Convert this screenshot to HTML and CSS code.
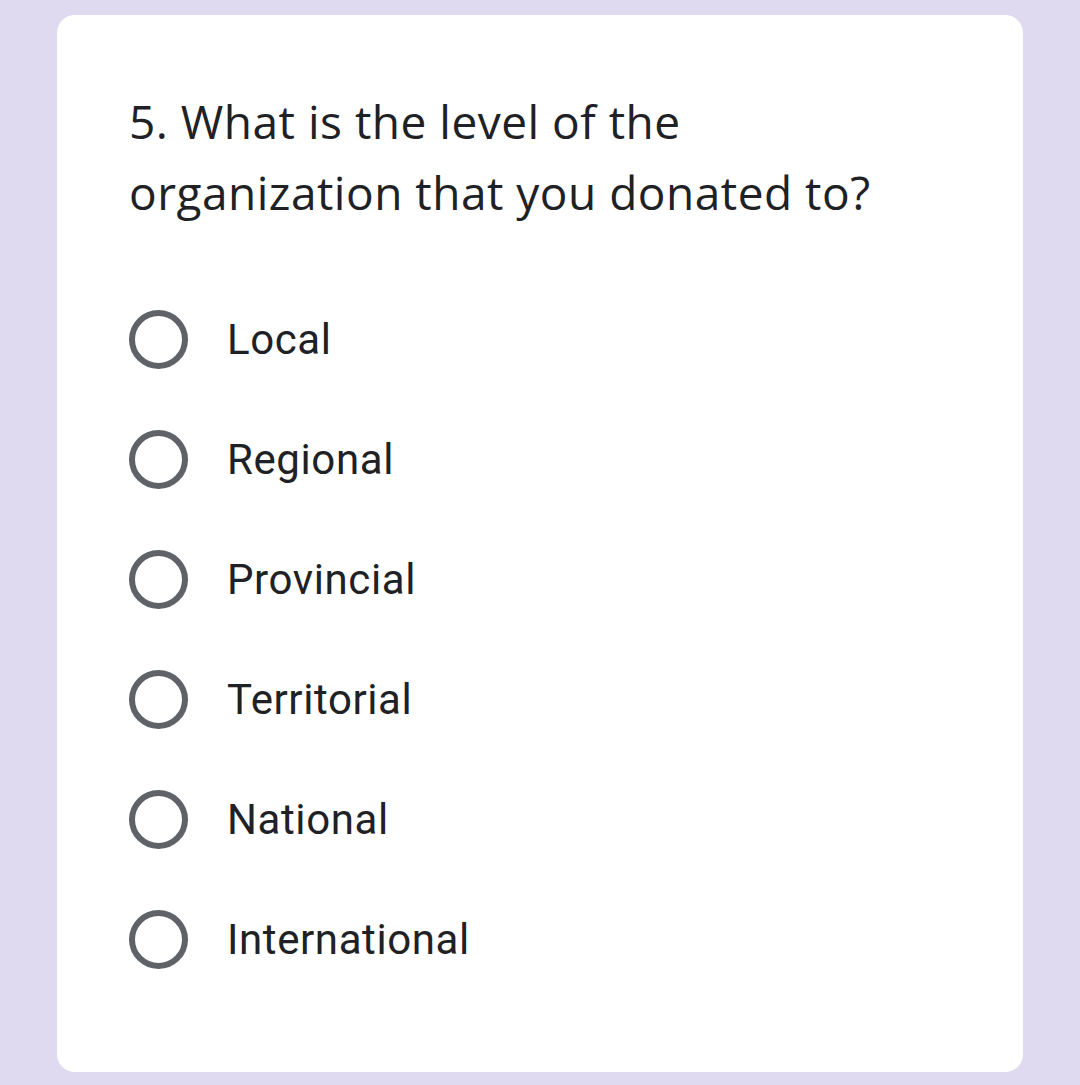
FILE: index.html
```html
<!DOCTYPE html>
<html>
<head>
<meta charset="utf-8">
<link rel="stylesheet" href="styles.css">
</head>
<body>
<div class="card">
  <div class="question">5. What is the level of the organization that you donated to?</div>
  <div class="options">
    <div class="option"><span class="radio"></span><span class="label">Local</span></div>
    <div class="option"><span class="radio"></span><span class="label">Regional</span></div>
    <div class="option"><span class="radio"></span><span class="label">Provincial</span></div>
    <div class="option"><span class="radio"></span><span class="label">Territorial</span></div>
    <div class="option"><span class="radio"></span><span class="label">National</span></div>
    <div class="option"><span class="radio"></span><span class="label">International</span></div>
  </div>
</div>
</body>
</html>
```
FILE: styles.css
```css
html, body {
  margin: 0;
  padding: 0;
}
body {
  background: #e0daf1;
  width: 1080px;
  height: 1085px;
  padding-top: 15px;
  box-sizing: border-box;
  font-family: Roboto, "Noto Sans", sans-serif;
  color: #202124;
}
.card {
  margin-left: 57px;
  width: 966px;
  height: 1057px;
  background: #fff;
  border-radius: 18px;
  box-sizing: border-box;
  padding: 71px 0 0 72px;
}
.question {
  font-family: "Open Sans", Roboto, sans-serif;
  font-size: 46px;
  line-height: 71px;
  width: 780px;
  letter-spacing: 0.5px;
  color: #202124;
}
.options {
  margin-top: 82px;
  display: flex;
  flex-direction: column;
  gap: 61px;
}
.option {
  display: flex;
  align-items: center;
  height: 59px;
}
.radio {
  width: 59px;
  height: 59px;
  box-sizing: border-box;
  border: 6px solid #5f6368;
  border-radius: 50%;
  flex: none;
}
.label {
  margin-left: 39px;
  font-size: 42px;
  letter-spacing: 0.6px;
  color: #202124;
}
```
